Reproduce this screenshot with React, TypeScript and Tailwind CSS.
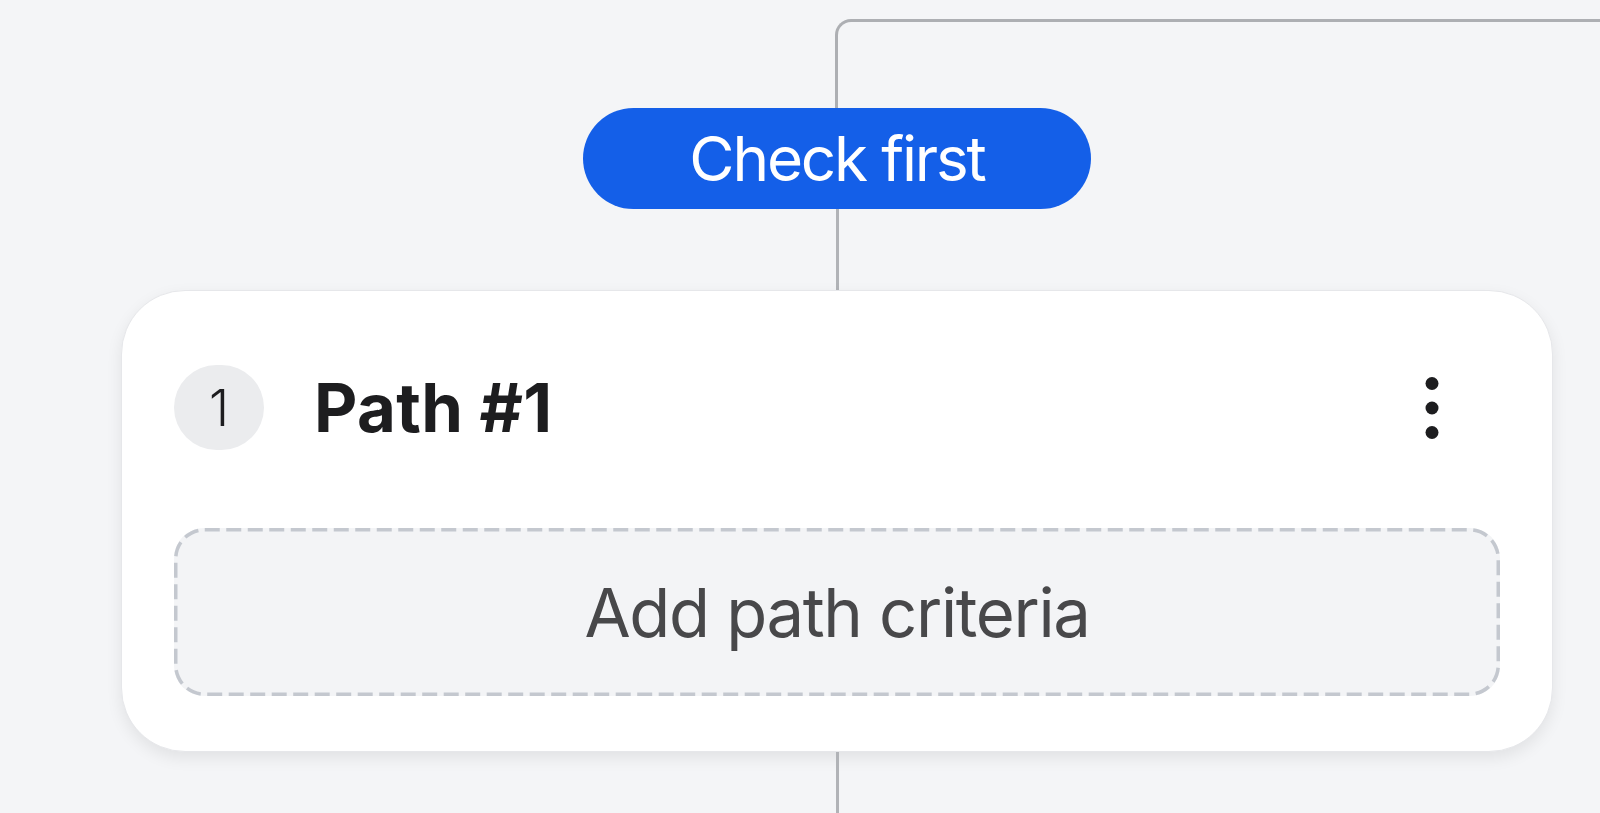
import React from 'react';

const LINE = 'bg-[#b1b3b7]';

// three stacked dots, drawn rather than taken from an icon set so the spacing matches
const KebabIcon = () => (
  <svg width="14" height="64" viewBox="0 0 14 64" fill="#1d1d1f">
    <circle cx="7" cy="7.5" r="6.5" />
    <circle cx="7" cy="32" r="6.5" />
    <circle cx="7" cy="56.5" r="6.5" />
  </svg>
);

const PathCard: React.FC<{ index: number; title: string }> = ({ index, title }) => (
  <div className="w-full rounded-[64px] bg-white border border-[#e6e7ea] shadow-[0_6px_16px_rgba(0,0,0,0.08)] px-[52px] pt-[74px] pb-[55px]">
    {/* Header */}
    <div className="flex items-center h-[85px]">
      <div className="w-[90px] h-[85px] rounded-full bg-[#ebecee] flex items-center justify-center text-[51px] font-light text-[#1d1d1f] leading-none">
        {index}
      </div>
      <div className="ml-[50px] text-[67px] font-bold text-[#1d1d1f] leading-none tracking-[0.005em]">
        {title}
      </div>
      <button type="button" className="ml-auto mr-[44px] w-[48px] h-[85px] flex items-center justify-center">
        <KebabIcon />
      </button>
    </div>

    {/* Criteria drop zone */}
    <div className="relative mt-[78px] h-[168px] rounded-[30px] bg-[#f3f4f6] flex items-center justify-center">
      <svg className="absolute inset-0 w-full h-full overflow-visible" fill="none">
        <rect
          x="1.75"
          y="1.75"
          width="calc(100% - 3.5px)"
          height="calc(100% - 3.5px)"
          rx="29"
          stroke="#c4c8cf"
          strokeWidth="3.5"
          strokeDasharray="15 6.5"
        />
      </svg>
      <span className="text-[67px] text-[#48484a] leading-none tracking-[-0.02em]">Add path criteria</span>
    </div>
  </div>
);

export default function App() {
  return (
    <div
      className="min-h-[813px] h-[813px] bg-[#f4f5f7] overflow-hidden pt-[19px] flex flex-col"
      style={{ fontFamily: 'Inter, "Noto Sans", sans-serif' }}
    >
      {/* Branch connector coming in from the right */}
      <div className="flex h-[89px] shrink-0">
        <div className="w-[835px] shrink-0" />
        <div className="flex-1 border-l-[3px] border-t-[3px] border-[#adafb3] rounded-tl-[16px]" />
      </div>

      <div className="ml-[121px] w-[1432px] flex flex-col items-center flex-1">
        <div className="w-[508px] h-[101px] shrink-0 rounded-full bg-[#145fe8] flex items-center justify-center text-white text-[62px] leading-none tracking-[-0.035em]">
          Check first
        </div>

        <div className={`w-[3px] h-[81px] shrink-0 ${LINE}`} />

        <PathCard index={1} title="Path #1" />

        <div className={`w-[3px] flex-1 ${LINE}`} />
      </div>
    </div>
  );
}
